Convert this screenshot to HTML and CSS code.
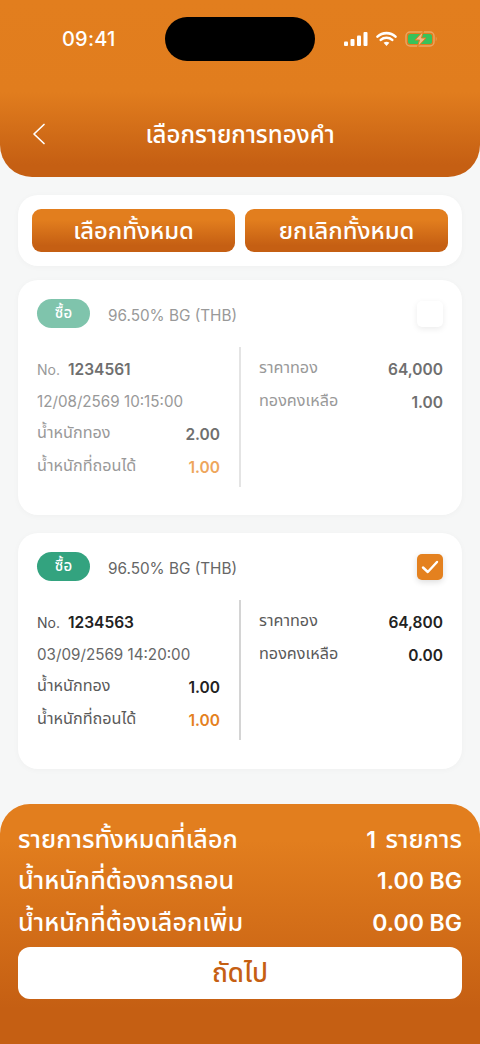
FILE: index.html
```html
<!DOCTYPE html>
<html lang="th">
<head>
<meta charset="utf-8">
<title>เลือกรายการทองคำ</title>
<link rel="stylesheet" href="styles.css">
</head>
<body>
<div class="screen">
  <header class="header">
    <div class="status">
      <span class="time">09:41</span>
      <div class="island"></div>
      <div class="status-icons">
        <svg width="24" height="16" viewBox="0 0 24 16"><rect x="0" y="10.500" width="4" height="4.500" rx="1" fill="#fff"/><rect x="6.500" y="8" width="4" height="7" rx="1" fill="#fff"/><rect x="13" y="4.500" width="4" height="10.500" rx="1" fill="#fff"/><rect x="19.500" y="1" width="4" height="14" rx="1" fill="#fff"/></svg>
        <svg width="21" height="16" viewBox="0 0 21 16"><path d="M1.500 5.600C6.500 1 14.500 1 19.500 5.600M4.800 8.900C7.900 6.100 13.100 6.100 16.200 8.900" fill="none" stroke="#fff" stroke-width="2.600" stroke-linecap="round"/><path d="M7.600 11.800C9.300 10.400 11.700 10.400 13.400 11.800L10.500 15z" fill="#fff"/></svg>
        <svg width="33" height="18" viewBox="0 0 33 18"><rect x="1" y="2" width="28" height="14" rx="4" fill="none" stroke="#eba661" stroke-width="1.400"/><rect x="3" y="4" width="24" height="10" rx="2.500" fill="#38c25a"/><path d="M30.800 6.800c1 .5 1 3.900 0 4.400z" fill="#eba661"/><path d="M18.500 1 10 10h4.500L12.500 17 21 8h-4.500z" fill="#f0b985" stroke="#e27e1e" stroke-width="1"/></svg>
      </div>
    </div>
    <div class="nav">
      <svg class="back" width="14" height="22" viewBox="0 0 14 22"><path d="M12 1.500 2 11l10 9.500" fill="none" stroke="#fff" stroke-width="1.700" stroke-linecap="round" stroke-linejoin="round"/></svg>
      <h1 class="title">เลือกรายการทองคำ</h1>
    </div>
  </header>

  <main class="content">
    <section class="actions">
      <button class="action">เลือกทั้งหมด</button>
      <button class="action">ยกเลิกทั้งหมด</button>
    </section>

    <article class="card dim">
      <div class="card-top">
        <span class="pill">ซื้อ</span>
        <span class="product">96.50% BG (THB)</span>
        <span class="check"></span>
      </div>
      <div class="cols">
        <div class="col left">
          <div class="row start"><span class="no">No.</span><b class="val">1234561</b></div>
          <div class="row"><span class="date">12/08/2569 10:15:00</span></div>
          <div class="row between"><span class="label">น้ำหนักทอง</span><b class="val">2.00</b></div>
          <div class="row between"><span class="label">น้ำหนักที่ถอนได้</span><b class="val gold">1.00</b></div>
        </div>
        <div class="col right">
          <div class="row between"><span class="label">ราคาทอง</span><b class="val">64,000</b></div>
          <div class="row between"><span class="label">ทองคงเหลือ</span><b class="val">1.00</b></div>
        </div>
      </div>
    </article>

    <article class="card">
      <div class="card-top">
        <span class="pill">ซื้อ</span>
        <span class="product">96.50% BG (THB)</span>
        <span class="check on"><svg width="18" height="14" viewBox="0 0 18 14"><path d="M2 7.500 6.800 12 16 2" fill="none" stroke="#fff" stroke-width="2.400" stroke-linecap="round" stroke-linejoin="round"/></svg></span>
      </div>
      <div class="cols">
        <div class="col left">
          <div class="row start"><span class="no">No.</span><b class="val">1234563</b></div>
          <div class="row"><span class="date">03/09/2569 14:20:00</span></div>
          <div class="row between"><span class="label">น้ำหนักทอง</span><b class="val">1.00</b></div>
          <div class="row between"><span class="label">น้ำหนักที่ถอนได้</span><b class="val gold">1.00</b></div>
        </div>
        <div class="col right">
          <div class="row between"><span class="label">ราคาทอง</span><b class="val">64,800</b></div>
          <div class="row between"><span class="label">ทองคงเหลือ</span><b class="val">0.00</b></div>
        </div>
      </div>
    </article>
  </main>

  <footer class="footer">
    <div class="sum"><span>รายการทั้งหมดที่เลือก</span><span><span class="num gap">1</span> รายการ</span></div>
    <div class="sum"><span>น้ำหนักที่ต้องการถอน</span><span class="num">1.00 BG</span></div>
    <div class="sum"><span>น้ำหนักที่ต้องเลือกเพิ่ม</span><span class="num">0.00 BG</span></div>
    <button class="next">ถัดไป</button>
  </footer>
</div>
</body>
</html>
```

FILE: styles.css
```css
* { box-sizing: border-box; }
html, body { margin: 0; padding: 0; }
body {
  background: #f6f7f7;
  font-family: Inter, "Noto Sans Thai", "Noto Sans", "Liberation Sans", sans-serif;
  color: #222;
}
.screen { width: 480px; height: 1044px; display: flex; flex-direction: column; overflow: hidden; }

.header {
  height: 177px;
  flex: none;
  padding-top: 17px;
  border-radius: 0 0 32px 32px;
  background: linear-gradient(180deg, #e27e1e 0, #e17d1e 92px, #c55f13 165px, #c55f13 100%);
  color: #fff;
}
.status { height: 44px; display: flex; align-items: center; padding: 0 42px 0 62px; }
.time { width: 103px; font-size: 20px; font-weight: 500; letter-spacing: .2px; }
.island { width: 150px; height: 44px; border-radius: 22px; background: #000; }
.status-icons { display: flex; align-items: center; gap: 8px; margin-left: 29px; }
.nav { position: relative; height: 38px; margin-top: 55px; display: flex; align-items: center; justify-content: center; }
.back { position: absolute; left: 32px; top: 7px; }
.title { margin: 0; font-size: 24px; font-weight: 500; line-height: 38px; }

.content { flex: 1; padding: 18px 18px 0; display: flex; flex-direction: column; }
.actions {
  height: 71px;
  padding: 14px;
  background: #fff;
  border-radius: 20px;
  display: flex;
  gap: 10px;
  box-shadow: 0 1px 6px rgba(0,0,0,.03);
}
.action {
  flex: 1;
  padding: 3px 0 0;
  border: 0;
  border-radius: 9px;
  color: #fff;
  font: inherit;
  font-size: 23.800px;
  font-weight: 500;
  background: linear-gradient(180deg, #e27e1e 0, #e27e1e 25%, #c55f13 85%);
}
.card {
  height: 235px;
  margin-top: 14px;
  padding: 19px 19px 0;
  background: #fff;
  border-radius: 20px;
  box-shadow: 0 1px 6px rgba(0,0,0,.03);
}
.card + .card { margin-top: 18px; height: 236px; }
.card-top { height: 29px; display: flex; align-items: center; }
.pill {
  width: 53px; height: 29px; border-radius: 15px;
  background: #33a37f; color: #fff;
  display: flex; align-items: center; justify-content: center;
  font-size: 15px; font-weight: 500;
}
.product { margin-left: 18px; padding-top: 3px; font-size: 15.300px; color: #666; flex: 1; }
.check {
  width: 26px; height: 26px; border-radius: 5px; background: #fff;
  box-shadow: 0 2px 6px rgba(0,0,0,.14);
  display: flex; align-items: center; justify-content: center;
}
.check.on { background: #e4811f; }
.cols { display: flex; height: 140px; margin-top: 19px; }
.col { flex: none; padding-top: 6px; }
.left { width: 204px; padding-right: 19px; border-right: 2px solid #d4d4d4; }
.right { flex: 1; padding-left: 18px; }
.row { height: 32.700px; display: flex; align-items: center; }
.between { justify-content: space-between; }
.start { gap: 8px; }
.no { color: #555; font-size: 14px; }
.label { color: #5a5a5a; font-size: 16.200px; margin-bottom: 3px; }
.date { color: #666; font-size: 15.200px; line-height: 30px; }
.val { font-weight: 600; font-size: 15.500px; color: #222; }
.gold { color: #e4811f; }
.dim .pill { background: #7fc4ac; }
.dim .product, .dim .date, .dim .no, .dim .label { color: #999; }
.dim .val { color: #6f6f6f; }
.dim .val.gold { color: #eea65c; }
.dim .check { box-shadow: 0 2px 6px rgba(0,0,0,.08); }
.dim .left { border-right-color: #e4e4e4; }

.footer {
  height: 240px;
  flex: none;
  padding: 15px 18px 0;
  border-radius: 30px 30px 0 0;
  background: linear-gradient(180deg, #e27e1e 0, #e27e1e 15%, #c55f13 85%);
  color: #fff;
}
.sum { height: 41.500px; display: flex; justify-content: space-between; align-items: center; font-size: 25.200px; font-weight: 500; }
.num { font-size: 23px; font-weight: 600; }
.gap { margin-right: 3px; }
.next {
  display: block; width: 100%; height: 52px; margin-top: 3px;
  border: 0; border-radius: 12px; background: #fff;
  color: #c55f13; font: inherit; font-size: 26px; font-weight: 500; padding: 3px 0 0;
}
```
